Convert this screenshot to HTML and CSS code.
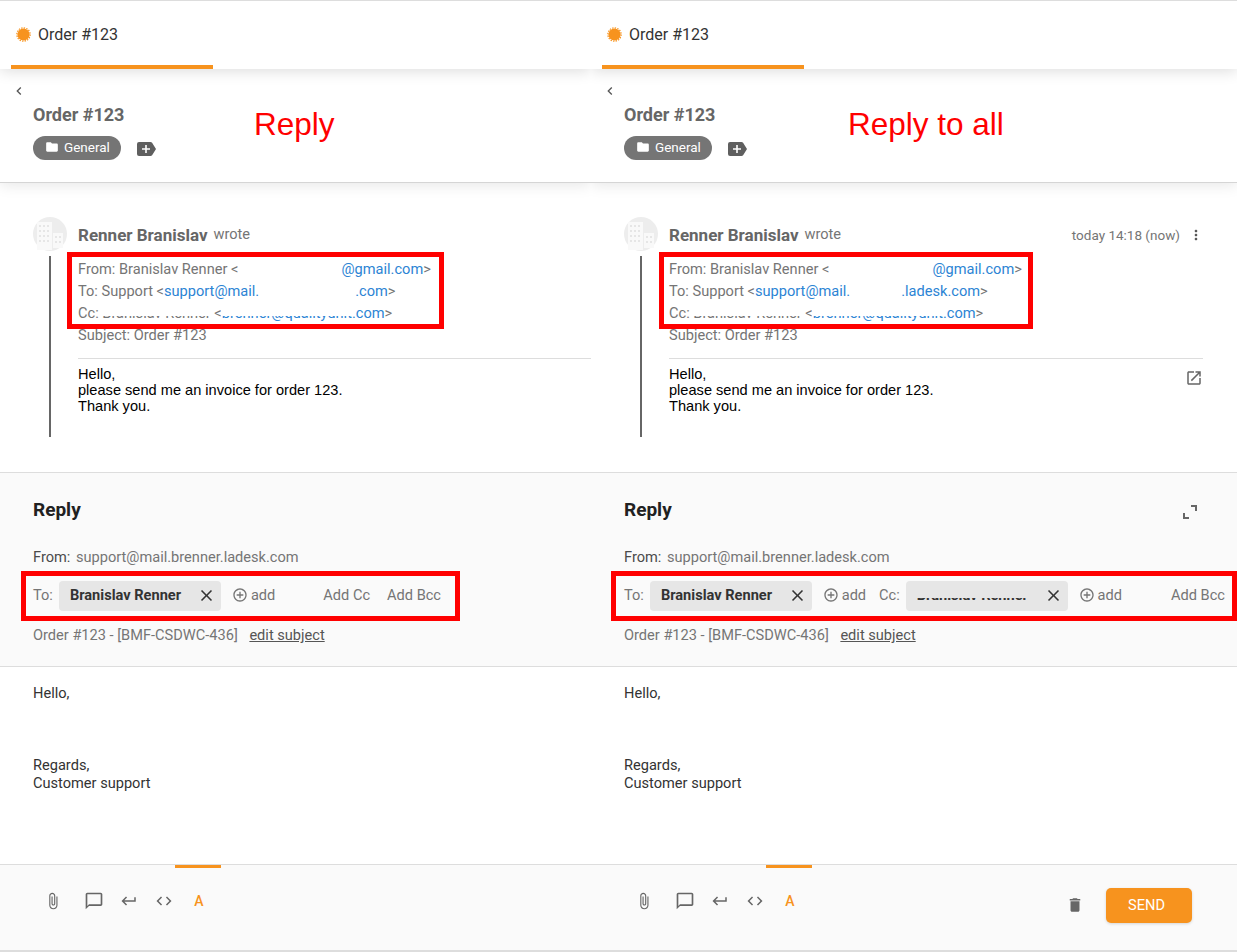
FILE: index.html
```html
<!DOCTYPE html>
<html lang="en">
<head>
    <meta charset="UTF-8">
    <meta name="viewport" content="width=device-width, initial-scale=1.0">
    <title>Order #123 - Reply and Reply to all</title>
    <link rel="stylesheet" href="styles.css">
</head>
<body>
    <svg class="defs" aria-hidden="true">
        <symbol id="i-back" viewBox="0 0 24 24"><path d="M15.41 7.41L14 6l-6 6 6 6 1.41-1.41L10.83 12z"/></symbol>
        <symbol id="i-folder" viewBox="0 0 24 24"><path d="M10 4H4c-1.1 0-1.99.9-1.99 2L2 18c0 1.1.9 2 2 2h16c1.1 0 2-.9 2-2V8c0-1.1-.9-2-2-2h-8l-2-2z"/></symbol>
        <symbol id="i-tag" viewBox="0 0 19 14"><path d="M0 2a2 2 0 0 1 2-2h11.5a2 2 0 0 1 1.6.8L19 7l-3.9 6.2a2 2 0 0 1-1.6.8H2a2 2 0 0 1-2-2z"/><path fill="#fff" d="M8.2 3h1.6v3.2H13v1.6H9.800V11H8.200V7.800H5V6.200h3.200z"/></symbol>
        <symbol id="i-badge" viewBox="0 0 16 16"><circle cx="8" cy="8" r="6.500"/><circle cx="8" cy="8" r="7.100" fill="none" stroke="#f7931e" stroke-width="1.300" stroke-dasharray="1.500 1.290"/></symbol>
        <symbol id="i-avatar" viewBox="0 0 34 34"><circle cx="17" cy="17" r="17" fill="#ededed"/><path fill="#f9f9f9" d="M4 5h15v28H4zM20 16h10v15H20z"/><path fill="#e6e6e6" d="M6 8h2v2H6zM10 8h2v2h-2zM14 8h2v2h-2zM6 13h2v2H6zM10 13h2v2h-2zM14 13h2v2h-2zM6 18h2v2H6zM10 18h2v2h-2zM14 18h2v2h-2zM6 23h2v2H6zM10 23h2v2h-2zM14 23h2v2h-2zM22 19h2v2h-2zM26 19h2v2h-2zM22 24h2v2h-2zM26 24h2v2h-2z"/></symbol>
        <symbol id="i-more" viewBox="0 0 24 24"><path d="M12 8c1.100 0 2-.9 2-2s-.9-2-2-2-2 .9-2 2 .9 2 2 2zm0 2c-1.100 0-2 .9-2 2s.9 2 2 2 2-.9 2-2-.9-2-2-2zm0 6c-1.100 0-2 .9-2 2s.9 2 2 2 2-.9 2-2-.9-2-2-2z"/></symbol>
        <symbol id="i-open" viewBox="0 0 24 24"><path d="M19 19H5V5h7V3H5c-1.110 0-2 .9-2 2v14c0 1.100.89 2 2 2h14c1.100 0 2-.9 2-2v-7h-2v7zM14 3v2h3.590l-9.830 9.830 1.410 1.410L19 6.410V10h2V3h-7z"/></symbol>
        <symbol id="i-expand" viewBox="0 0 16 16"><path d="M9 1h6v6h-2V3H9zM1 9h2v4h4v2H1z"/></symbol>
        <symbol id="i-close" viewBox="0 0 24 24"><path d="M19 6.410L17.590 5 12 10.590 6.410 5 5 6.410 10.590 12 5 17.590 6.410 19 12 13.410 17.590 19 19 17.590 13.410 12z"/></symbol>
        <symbol id="i-add" viewBox="0 0 24 24"><path d="M13 7h-2v4H7v2h4v4h2v-4h4v-2h-4V7zm-1-5C6.480 2 2 6.480 2 12s4.480 10 10 10 10-4.480 10-10S17.520 2 12 2zm0 18c-4.410 0-8-3.590-8-8s3.590-8 8-8 8 3.590 8 8-3.590 8-8 8z"/></symbol>
        <symbol id="i-clip" viewBox="0 0 24 24"><path d="M16.500 6v11.500c0 2.210-1.790 4-4 4s-4-1.790-4-4V5c0-1.380 1.120-2.500 2.500-2.500s2.500 1.120 2.500 2.500v10.500c0 .55-.45 1-1 1s-1-.45-1-1V6H10v9.500c0 1.380 1.120 2.500 2.500 2.500s2.500-1.120 2.500-2.500V5c0-2.210-1.790-4-4-4S7 2.790 7 5v12.500c0 3.040 2.460 5.500 5.500 5.500s5.500-2.460 5.500-5.500V6h-1.500z"/></symbol>
        <symbol id="i-chat" viewBox="0 0 24 24"><path d="M20 2H4c-1.100 0-2 .9-2 2v18l4-4h14c1.100 0 2-.9 2-2V4c0-1.100-.9-2-2-2zm0 14H6l-2 2V4h16v12z"/></symbol>
        <symbol id="i-return" viewBox="0 0 24 24"><path d="M19 7v4H5.830l3.580-3.590L8 6l-6 6 6 6 1.410-1.410L5.830 13H21V7z"/></symbol>
        <symbol id="i-code" viewBox="0 0 24 24"><path d="M9.400 16.600L4.800 12l4.600-4.600L8 6l-6 6 6 6 1.400-1.400zm5.200 0l4.600-4.600-4.600-4.600L16 6l6 6-6 6-1.400-1.400z"/></symbol>
        <symbol id="i-trash" viewBox="0 0 24 24"><path d="M6 19c0 1.100.9 2 2 2h8c1.100 0 2-.9 2-2V7H6v12zM19 4h-3.500l-1-1h-5l-1 1H5v2h14V4z"/></symbol>
    </svg>

    <div class="screens">
        <section class="panel">
            <div class="tabs">
                <div class="tab">
                    <svg class="badge"><use href="#i-badge"/></svg>
                    <span>Order #123</span>
                </div>
            </div>
            <header class="head">
                <svg class="back"><use href="#i-back"/></svg>
                <h1 class="title">Order #123</h1>
                <div class="labels">
                    <span class="dept"><svg class="ico-14"><use href="#i-folder"/></svg>General</span>
                    <svg class="tag-add"><use href="#i-tag"/></svg>
                </div>
            </header>

            <div class="thread">
                <div class="side">
                    <svg class="avatar"><use href="#i-avatar"/></svg>
                    <div class="side-line"></div>
                </div>
                <div class="msg">
                    <div class="msg-top">
                        <strong class="author">Renner Branislav</strong>
                        <span class="wrote">wrote</span>
                    </div>
                    <div class="meta">
                        <div>From: Branislav Renner &lt;<span class="gap gap-from"></span><a>@gmail.com</a>&gt;</div>
                        <div>To: Support &lt;<a>support@mail.</a><span class="gap gap-to"></span><a>.com</a>&gt;</div>
                        <div>Cc: <span class="smudge">Branislav Renner</span> &lt;<a class="smudge">brenner@qualityunit</a><a>.com</a>&gt;</div>
                        <div>Subject: Order #123</div>
                    </div>
                    <div class="msg-body">
                        <div>Hello,<br>please send me an invoice for order 123.<br>Thank you.</div>
                    </div>
                </div>
            </div>

            <div class="reply">
                <div class="reply-top">
                    <h2 class="reply-title">Reply</h2>
                </div>
                <div class="from"><span class="from-label">From:</span> support@mail.brenner.ladesk.com</div>
                <div class="rcpt">
                    <span class="rcpt-text">To:</span>
                    <span class="chip"><b>Branislav Renner</b><svg class="ico-19"><use href="#i-close"/></svg></span>
                    <span class="add rcpt-text"><svg class="ico-16"><use href="#i-add"/></svg>add</span>
                    <span class="extra rcpt-text">Add Cc</span>
                    <span class="extra rcpt-text">Add Bcc</span>
                </div>
                <div class="subject">Order #123 - [BMF-CSDWC-436] <u>edit subject</u></div>
            </div>

            <div class="editor">
                <div>Hello,</div>
                <div class="regards">Regards,</div>
                <div>Customer support</div>
            </div>

            <div class="toolbar">
                <span class="tool tool-first"><svg class="ico-18"><use href="#i-clip"/></svg></span>
                <span class="tool tool-chat"><svg class="ico-20"><use href="#i-chat"/></svg></span>
                <span class="tool"><svg class="ico-18"><use href="#i-return"/></svg></span>
                <span class="tool"><svg class="ico-18"><use href="#i-code"/></svg></span>
                <span class="tool tool-active">A</span>
            </div>

            <div class="note note-meta"></div>
            <div class="note note-rcpt"></div>
            <div class="caption">Reply</div>
        </section>

        <section class="panel panel-all">
            <div class="tabs">
                <div class="tab">
                    <svg class="badge"><use href="#i-badge"/></svg>
                    <span>Order #123</span>
                </div>
            </div>
            <header class="head">
                <svg class="back"><use href="#i-back"/></svg>
                <h1 class="title">Order #123</h1>
                <div class="labels">
                    <span class="dept"><svg class="ico-14"><use href="#i-folder"/></svg>General</span>
                    <svg class="tag-add"><use href="#i-tag"/></svg>
                </div>
            </header>

            <div class="thread">
                <div class="side">
                    <svg class="avatar"><use href="#i-avatar"/></svg>
                    <div class="side-line"></div>
                </div>
                <div class="msg">
                    <div class="msg-top">
                        <strong class="author">Renner Branislav</strong>
                        <span class="wrote">wrote</span>
                        <span class="time">today 14:18 (now)</span>
                        <svg class="ico-16 more"><use href="#i-more"/></svg>
                    </div>
                    <div class="meta">
                        <div>From: Branislav Renner &lt;<span class="gap gap-from"></span><a>@gmail.com</a>&gt;</div>
                        <div>To: Support &lt;<a>support@mail.</a><span class="gap gap-to-all"></span><a>.ladesk.com</a>&gt;</div>
                        <div>Cc: <span class="smudge">Branislav Renner</span> &lt;<a class="smudge">brenner@qualityunit</a><a>.com</a>&gt;</div>
                        <div>Subject: Order #123</div>
                    </div>
                    <div class="msg-body">
                        <div>Hello,<br>please send me an invoice for order 123.<br>Thank you.</div>
                        <svg class="ico-18 open"><use href="#i-open"/></svg>
                    </div>
                </div>
            </div>

            <div class="reply">
                <div class="reply-top">
                    <h2 class="reply-title">Reply</h2>
                    <svg class="ico-16 expand"><use href="#i-expand"/></svg>
                </div>
                <div class="from"><span class="from-label">From:</span> support@mail.brenner.ladesk.com</div>
                <div class="rcpt">
                    <span class="rcpt-text">To:</span>
                    <span class="chip"><b>Branislav Renner</b><svg class="ico-19"><use href="#i-close"/></svg></span>
                    <span class="add rcpt-text"><svg class="ico-16"><use href="#i-add"/></svg>add</span>
                    <span class="cc-label rcpt-text">Cc:</span>
                    <span class="chip"><b class="smudge smudge-chip">Branislav Renner</b><svg class="ico-19"><use href="#i-close"/></svg></span>
                    <span class="add rcpt-text"><svg class="ico-16"><use href="#i-add"/></svg>add</span>
                    <span class="extra rcpt-text">Add Bcc</span>
                </div>
                <div class="subject">Order #123 - [BMF-CSDWC-436] <u>edit subject</u></div>
            </div>

            <div class="editor">
                <div>Hello,</div>
                <div class="regards">Regards,</div>
                <div>Customer support</div>
            </div>

            <div class="toolbar">
                <span class="tool tool-first"><svg class="ico-18"><use href="#i-clip"/></svg></span>
                <span class="tool tool-chat"><svg class="ico-20"><use href="#i-chat"/></svg></span>
                <span class="tool"><svg class="ico-18"><use href="#i-return"/></svg></span>
                <span class="tool"><svg class="ico-18"><use href="#i-code"/></svg></span>
                <span class="tool tool-active">A</span>
                <div class="actions">
                    <svg class="ico-18 trash"><use href="#i-trash"/></svg>
                    <button class="send">SEND</button>
                </div>
            </div>

            <div class="note note-meta"></div>
            <div class="note note-rcpt"></div>
            <div class="caption">Reply to all</div>
        </section>
    </div>
</body>
</html>
```
FILE: styles.css
```css
html, body {
    margin: 0;
    padding: 0;
    height: 100%;
    overflow: hidden;
    background: #fff;
    font-family: Roboto, sans-serif;
    font-size: 14.6px;
    color: #757575;
}
.defs {
    position: absolute;
    width: 0;
    height: 0;
}
svg {
    fill: currentColor;
    flex: none;
    display: block;
}
.ico-14 { width: 14px; height: 14px; }
.ico-16 { width: 16px; height: 16px; }
.ico-18 { width: 18px; height: 18px; }
.ico-19 { width: 19px; height: 19px; }
.ico-20 { width: 20px; height: 20px; }

.screens {
    display: grid;
    grid-template-columns: 591px 646px;
    height: 952px;
}
.panel {
    position: relative;
    display: flex;
    flex-direction: column;
    height: 952px;
    overflow: hidden;
    border-bottom: 2px solid #ddd;
    box-sizing: border-box;
}

/* tab strip */
.tabs {
    position: relative;
    z-index: 2;
    height: 69px;
    flex: none;
    box-sizing: border-box;
    border-top: 1px solid #ddd;
    padding-left: 11px;
    background: #fff;
    box-shadow: 0 2px 14px rgba(0, 0, 0, .14);
}
.tab {
    width: 202px;
    height: 68px;
    box-sizing: border-box;
    padding: 2px 0 0 5px;
    display: flex;
    align-items: center;
    gap: 7px;
    border-bottom: 4px solid #f7931e;
    font-size: 16px;
    color: #333;
}
.badge {
    width: 15px;
    height: 15px;
    color: #f7931e;
}

/* ticket header */
.head {
    position: relative;
    z-index: 1;
    height: 114px;
    flex: none;
    box-sizing: border-box;
    padding-top: 14px;
    background: #fff;
    border-bottom: 1px solid #d5d5d5;
    box-shadow: 0 2px 14px rgba(0, 0, 0, .1);
}
.back {
    width: 16px;
    height: 16px;
    margin-left: 11px;
    color: #555;
}
.title {
    margin: 4px 0 0 33px;
    font-size: 18px;
    line-height: 24px;
    font-weight: 700;
    color: #666;
}
.labels {
    display: flex;
    align-items: center;
    margin: 9px 0 0 33px;
}
.dept {
    display: flex;
    align-items: center;
    gap: 5px;
    width: 88px;
    height: 24px;
    box-sizing: border-box;
    padding: 0 0 2px 12px;
    border-radius: 12px;
    background: #757575;
    color: #fff;
    font-size: 13.500px;
}
.tag-add {
    width: 19px;
    height: 14px;
    margin: 2px 0 0 16px;
    color: #5f5f5f;
}

/* incoming message */
.thread {
    height: 290px;
    flex: none;
    box-sizing: border-box;
    padding: 34px 0 0 33px;
    display: flex;
    gap: 11px;
    border-bottom: 1px solid #ddd;
}
.side {
    width: 34px;
    flex: none;
    display: flex;
    flex-direction: column;
    align-items: center;
}
.avatar {
    width: 34px;
    height: 34px;
}
.side-line {
    width: 2px;
    height: 181px;
    margin-top: 5px;
    background: #666;
}
.msg {
    flex: 1;
    min-width: 0;
}
.panel-all .msg {
    padding-right: 34px;
}
.msg-top {
    height: 36px;
    margin-bottom: 5px;
    display: flex;
    align-items: center;
    gap: 6px;
}
.author {
    font-size: 17px;
    color: #666;
}
.wrote {
    margin-top: -2px;
}
.time {
    margin-left: auto;
    font-size: 13.500px;
}
.more {
    margin: 0 -1px 0 2px;
    color: #555;
}
.meta {
    line-height: 22px;
    padding-bottom: 12px;
    border-bottom: 1px solid #ddd;
}
.meta a {
    color: #2c84d4;
}
.gap {
    display: inline-block;
}
.gap-from { width: 103px; }
.gap-to { width: 96px; }
.gap-to-all { width: 51px; }

/* half wiped out text in the original picture */
.smudge {
    position: relative;
    display: inline-block;
    line-height: 14px;
}
.smudge::after {
    content: "";
    position: absolute;
    left: -1px;
    right: -1px;
    top: -1px;
    height: 11px;
    background: #fff;
}
.smudge-chip::after {
    background: #e6e6e6;
}
.msg-body {
    display: flex;
    justify-content: space-between;
    padding-top: 7px;
    font-family: "Liberation Sans", Arial, sans-serif;
    font-size: 14.600px;
    line-height: 16px;
    color: #000;
}
.open {
    margin: 3px 0 0;
    color: #666;
}

/* reply form */
.reply {
    height: 194px;
    flex: none;
    box-sizing: border-box;
    padding: 25px 12px 0 33px;
    background: #fafafa;
    border-bottom: 1px solid #ddd;
}
.reply-top {
    display: flex;
    justify-content: space-between;
    align-items: center;
    padding-right: 27px;
}
.reply-title {
    margin: 0;
    font-size: 19px;
    line-height: 24px;
    font-weight: 700;
    color: #212121;
}
.expand {
    margin-top: 4px;
    color: #666;
}
.from {
    margin-top: 25px;
    line-height: 20px;
}
.from-label {
    margin-right: 2px;
    color: #4a4a4a;
}
.rcpt {
    display: flex;
    align-items: center;
    height: 30px;
    margin-top: 14px;
    line-height: 28px;
    white-space: nowrap;
}
.rcpt-text {
    margin-bottom: 2px;
}
.chip {
    display: flex;
    align-items: center;
    justify-content: space-between;
    width: 162px;
    height: 30px;
    box-sizing: border-box;
    margin-left: 6px;
    padding: 0 5px 2px 11px;
    border-radius: 4px;
    background: #e6e6e6;
    color: #333;
}
.add {
    display: flex;
    align-items: center;
    gap: 3px;
    margin-left: 11px;
}
.cc-label {
    margin-left: 13px;
}
.extra {
    margin-left: 48px;
}
.panel-all .extra {
    margin-left: 49px;
}
.extra + .extra {
    margin-left: 17px;
}
.subject {
    margin-top: 14px;
    line-height: 20px;
}
.subject u {
    margin-left: 8px;
    color: #555;
}

/* editor */
.editor {
    height: 197px;
    flex: none;
    box-sizing: border-box;
    padding: 17px 0 0 33px;
    line-height: 18px;
    color: #333;
    background: #fff;
}
.regards {
    margin-top: 54px;
}

/* bottom toolbar */
.toolbar {
    flex: 1;
    display: flex;
    align-items: flex-start;
    padding-left: 35px;
    background: #fafafa;
    border-top: 1px solid #ddd;
    color: #666;
}
.tool {
    display: flex;
    align-items: center;
    justify-content: center;
    width: 35px;
    height: 69px;
    box-sizing: border-box;
    border-top: 3px solid transparent;
}
.tool-first {
    width: 36px;
}
.tool-chat {
    width: 35px;
    margin-left: 5px;
}
.tool-active {
    width: 46px;
    margin-left: -6px;
    padding-left: 2px;
    border-top-color: #f7931e;
    color: #f7931e;
    font-size: 14px;
    font-weight: 500;
}
.actions {
    display: flex;
    align-items: center;
    gap: 22px;
    margin: 23px 45px 0 auto;
}
.trash {
    margin-top: -2px;
}
.send {
    width: 86px;
    height: 35px;
    padding: 0 5px 2px 0;
    border: 0;
    border-radius: 5px;
    background: #f7931e;
    box-shadow: 0 1px 3px rgba(0, 0, 0, .15);
    color: #fff;
    font-family: Roboto, sans-serif;
    font-size: 14.600px;
}

/* red marks drawn on top of the screenshot */
.note {
    position: absolute;
    box-sizing: border-box;
    border: 5px solid #f00;
    z-index: 3;
}
.note-meta {
    left: 67px;
    top: 252px;
    width: 377px;
    height: 77px;
}
.panel-all .note-meta {
    left: 68px;
    width: 374px;
}
.note-rcpt {
    left: 21px;
    top: 571px;
    width: 439px;
    height: 50px;
}
.panel-all .note-rcpt {
    left: 20px;
    width: 626px;
}
.caption {
    position: absolute;
    z-index: 3;
    left: 254px;
    top: 105px;
    font-family: "Liberation Sans", Arial, sans-serif;
    font-size: 31.500px;
    line-height: 38px;
    color: #f00;
}
.panel-all .caption {
    left: 257px;
}
```
